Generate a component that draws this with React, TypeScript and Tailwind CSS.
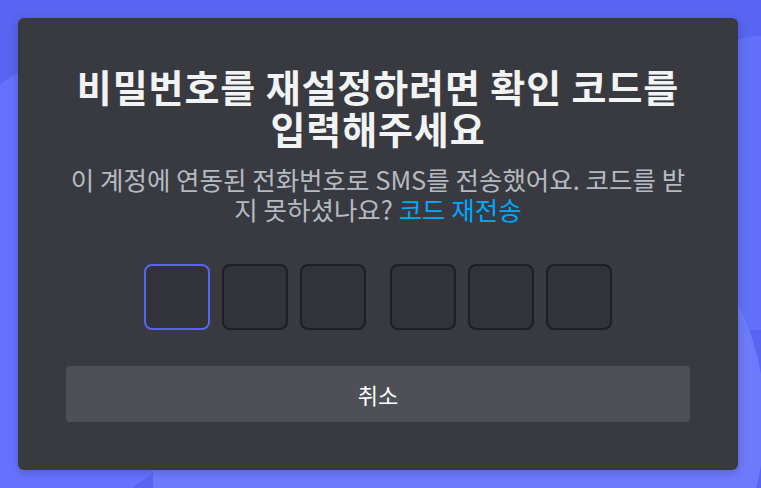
import React from "react";

const Backdrop = () => (
  <svg
    className="absolute inset-0 h-full w-full"
    viewBox="0 0 761 488"
    preserveAspectRatio="none"
    aria-hidden="true"
  >
    <rect width="761" height="488" fill="#5865f2" />
    <path d="M0,84 L60,46 L200,46 L200,440 L132,488 L0,488 Z" fill="#6572fd" />
    <path d="M700,60 Q745,26 780,40 L780,330 L700,330 Z" fill="#626ffb" />
    <rect x="153" y="440" width="420" height="48" fill="#6d7afb" />
    <circle cx="500" cy="420" r="265" fill="#6d7afb" />
  </svg>
);

const CodeBox = ({ active }: { active?: boolean }) => (
  <div
    className={`h-[66px] w-[66px] rounded-lg border-2 bg-[#313338] ${
      active ? "border-[#5865f2]" : "border-[#1e1f22]"
    }`}
  />
);

export default function App() {
  return (
    <div
      className="relative min-h-[488px] w-full overflow-hidden p-[18px]"
      style={{ fontFamily: '"Noto Sans CJK KR", "Noto Sans", sans-serif' }}
    >
      <Backdrop />
      <div className="relative flex w-[720px] flex-col items-center rounded-md bg-[#383a40] px-12 pb-12 pt-[47px] shadow-[0_2px_10px_rgba(0,0,0,0.2)]">
        <h1 className="text-center text-[38px] font-bold leading-[42px] tracking-[0.9px] text-[#f2f3f5]">
          비밀번호를 재설정하려면 확인 코드를 입력해주세요
        </h1>
        <p className="mt-[15px] text-center text-[25.5px] leading-[30px] text-[#b5bac1]">
          이 계정에 연동된 전화번호로 SMS를 전송했어요. 코드를 받지 못하셨나요?{" "}
          <a className="text-[#00a8fc]">코드 재전송</a>
        </p>
        <div className="mt-10 flex gap-6">
          <div className="flex gap-3">
            <CodeBox active />
            <CodeBox />
            <CodeBox />
          </div>
          <div className="flex gap-3">
            <CodeBox />
            <CodeBox />
            <CodeBox />
          </div>
        </div>
        <button className="mt-9 flex h-14 w-full items-center justify-center rounded bg-[#4e5058] text-[22px] font-normal text-white">
          취소
        </button>
      </div>
    </div>
  );
}
